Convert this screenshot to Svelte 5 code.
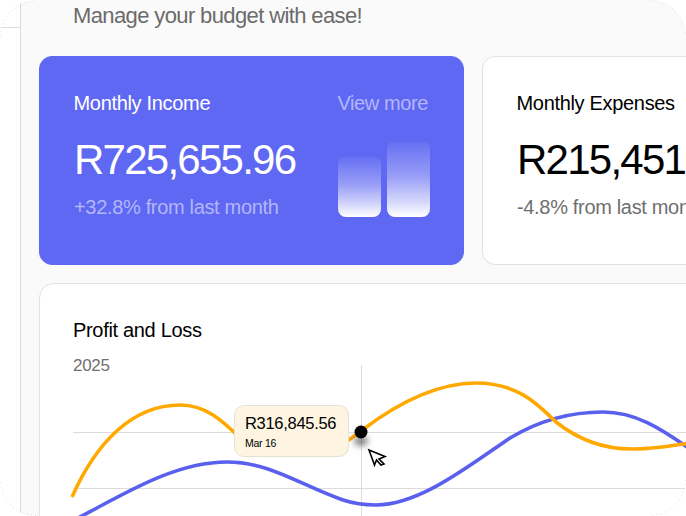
<script lang="ts">
	// curves are in page coordinates, the chart's viewBox starts at (73, 365)
	const incomeLine =
		'M72 497 C96 443 132 405 180 405 C205 405 222 420 240 438 C262 454 320 454 349 440 C353 437 357 434 361 431 C395 405 435 383 476 383 C520 383 540 407 556 422 C580 441 605 450 636 449 C655 449 670 446 690 443';
	const expenseLine =
		'M70 522 C115 500 170 462 227 462 C270 462 300 485 343 500 C355 504 365 505 376 505 C420 505 470 465 510 438 C540 420 570 412 603 412 C635 412 660 428 690 449';
</script>

<div class="screen">
	<aside class="sidebar">
		<div class="sidebar-top"></div>
	</aside>

	<main class="main">
		<p class="subtitle">Manage your budget with ease!</p>

		<div class="cards">
			<section class="card card-income">
				<div class="card-head">
					<h2>Monthly Income</h2>
					<span class="more">View more</span>
				</div>
				<div class="card-body">
					<div>
						<div class="amount">R725,655.96</div>
						<div class="change">+32.8% from last month</div>
					</div>
					<div class="bars">
						<div class="bar bar-low"></div>
						<div class="bar bar-high"></div>
					</div>
				</div>
			</section>

			<section class="card">
				<div class="card-head">
					<h2>Monthly Expenses</h2>
				</div>
				<div class="card-body">
					<div>
						<div class="amount">R215,451.20</div>
						<div class="change">-4.8% from last month</div>
					</div>
				</div>
			</section>
		</div>

		<section class="chart-card">
			<h2>Profit and Loss</h2>
			<div class="year">2025</div>
			<div class="chart">
				<svg width="613" height="151" viewBox="73 365 613 151" aria-hidden="true">
					<defs>
						<filter id="dot-shadow" x="-100%" y="-100%" width="300%" height="300%">
							<feGaussianBlur stdDeviation="3" />
						</filter>
					</defs>
					<line class="grid" x1="73" y1="432.5" x2="686" y2="432.5" />
					<line class="grid" x1="73" y1="488.5" x2="686" y2="488.5" />
					<line class="grid" x1="361.5" y1="365" x2="361.5" y2="516" />
					<path class="line line-blue" d={expenseLine} />
					<path class="line line-orange" d={incomeLine} />
					<ellipse cx="361" cy="441" rx="7" ry="5" fill="#555" opacity="0.75" filter="url(#dot-shadow)" />
					<circle cx="361" cy="432" r="6.5" fill="#000" />
					<path class="cursor" d="M369 450 L385 456.5 L379 459 L384 464 L381 465 L376.5 460 L374.5 465 Z" />
				</svg>
				<div class="tooltip">
					<div class="tooltip-value">R316,845.56</div>
					<div class="tooltip-date">Mar 16</div>
				</div>
			</div>
		</section>
	</main>

	<svg class="corners" width="686" height="516" viewBox="0 0 686 516" aria-hidden="true">
		<path d="M0.5 36 A36 36 0 0 1 36 0.5" />
		<path d="M650 0.5 A36 36 0 0 1 685.5 36" />
		<path d="M685.5 480 A36 36 0 0 1 650 515.5" />
		<path d="M36 515.5 A36 36 0 0 1 0.5 480" />
	</svg>
</div>

<style>
	:global(body) {
		background: #fff;
	}

	.screen {
		position: relative;
		display: flex;
		width: 686px;
		height: 516px;
		overflow: hidden;
		border-radius: 36px;
		background: #fafafa;
		font-family: 'Liberation Sans', Arial, sans-serif;
		color: #000;
	}

	.sidebar {
		flex: none;
		width: 20px;
		background: #fff;
		border-right: 1px solid #d9d9d9;
	}

	.sidebar-top {
		height: 27px;
		border-bottom: 1px solid #dcdcdc;
	}

	.main {
		flex: 1;
		min-width: 0;
		padding: 0 0 0 18px;
	}

	.subtitle {
		margin: 0;
		height: 56px;
		padding: 3px 0 0 34px;
		box-sizing: border-box;
		font-size: 22px;
		line-height: 25px;
		letter-spacing: -0.62px;
		color: #6b6b6b;
	}

	.cards {
		display: flex;
		gap: 18px;
	}

	.card {
		flex: none;
		width: 425px;
		height: 209px;
		box-sizing: border-box;
		padding: 34px 35px 0 33.5px;
		background: #fff;
		border: 1px solid #e2e2e2;
		border-radius: 13px;
	}

	.card-income {
		color: #fff;
		background: #5f68f2;
		border-color: #5f68f2;
	}

	.card-head {
		display: flex;
		justify-content: space-between;
		align-items: center;
		height: 24px;
	}

	h2 {
		margin: 0;
		font-size: 20px;
		line-height: 24px;
		font-weight: 400;
		letter-spacing: -0.32px;
	}

	.more {
		font-size: 20px;
		letter-spacing: -0.4px;
		color: #b3b6fa;
	}

	.card-body {
		display: flex;
		justify-content: space-between;
		align-items: flex-start;
	}

	.amount {
		margin-top: 20px;
		margin-left: 0.5px;
		font-size: 42px;
		line-height: 50px;
		letter-spacing: -1.75px;
	}

	.change {
		margin-top: 10px;
		margin-left: 0.5px;
		font-size: 20px;
		line-height: 24px;
		letter-spacing: -0.33px;
		color: #6f6f6f;
	}

	.card-income .change {
		color: #b3b6fa;
	}

	.bars {
		display: flex;
		align-items: flex-end;
		gap: 6px;
		height: 75px;
		margin: 27px -2px 0 0;
	}

	.bar {
		width: 43px;
		border-radius: 6px 6px 8px 8px;
		background: linear-gradient(to bottom, rgba(255, 255, 255, 0.05) 0%, rgba(255, 255, 255, 0.35) 45%, rgba(255, 255, 255, 0.72) 78%, #fff 100%);
	}

	.bar-low {
		height: 60px;
	}

	.bar-high {
		height: 75px;
	}

	.chart-card {
		width: 700px;
		height: 300px;
		box-sizing: border-box;
		margin-top: 18px;
		padding: 34px 0 0 33px;
		background: #fff;
		border: 1px solid #e2e2e2;
		border-radius: 15px;
	}

	.year {
		margin-top: 14px;
		font-size: 17px;
		line-height: 20px;
		letter-spacing: -0.3px;
		color: #6f6f6f;
	}

	.chart {
		position: relative;
		margin-top: -11px;
	}

	.chart svg {
		display: block;
		overflow: visible;
	}

	.grid {
		stroke: #dcdcdc;
		stroke-width: 1;
	}

	.line {
		fill: none;
		stroke-width: 3.6;
	}

	.line-orange {
		stroke: #ffa900;
	}

	.line-blue {
		stroke: #5a60ee;
	}

	.cursor {
		fill: #fff;
		stroke: #000;
		stroke-width: 1.6;
		stroke-linejoin: miter;
	}

	.tooltip {
		position: absolute;
		left: 161px;
		top: 40px;
		width: 115px;
		height: 52px;
		box-sizing: border-box;
		padding: 7px 10px 0;
		background: #fdf5e2;
		border: 1px solid #e6e1d2;
		border-radius: 10px;
	}

	.tooltip-value {
		font-size: 16.5px;
		line-height: 20px;
		letter-spacing: -0.3px;
	}

	.tooltip-date {
		margin-top: 3px;
		font-size: 10.5px;
		line-height: 14px;
		letter-spacing: -0.25px;
	}

	.corners {
		position: absolute;
		inset: 0;
		pointer-events: none;
	}

	.corners path {
		fill: none;
		stroke: #d6d6d6;
		stroke-width: 1;
		stroke-dasharray: 1 3;
	}
</style>
